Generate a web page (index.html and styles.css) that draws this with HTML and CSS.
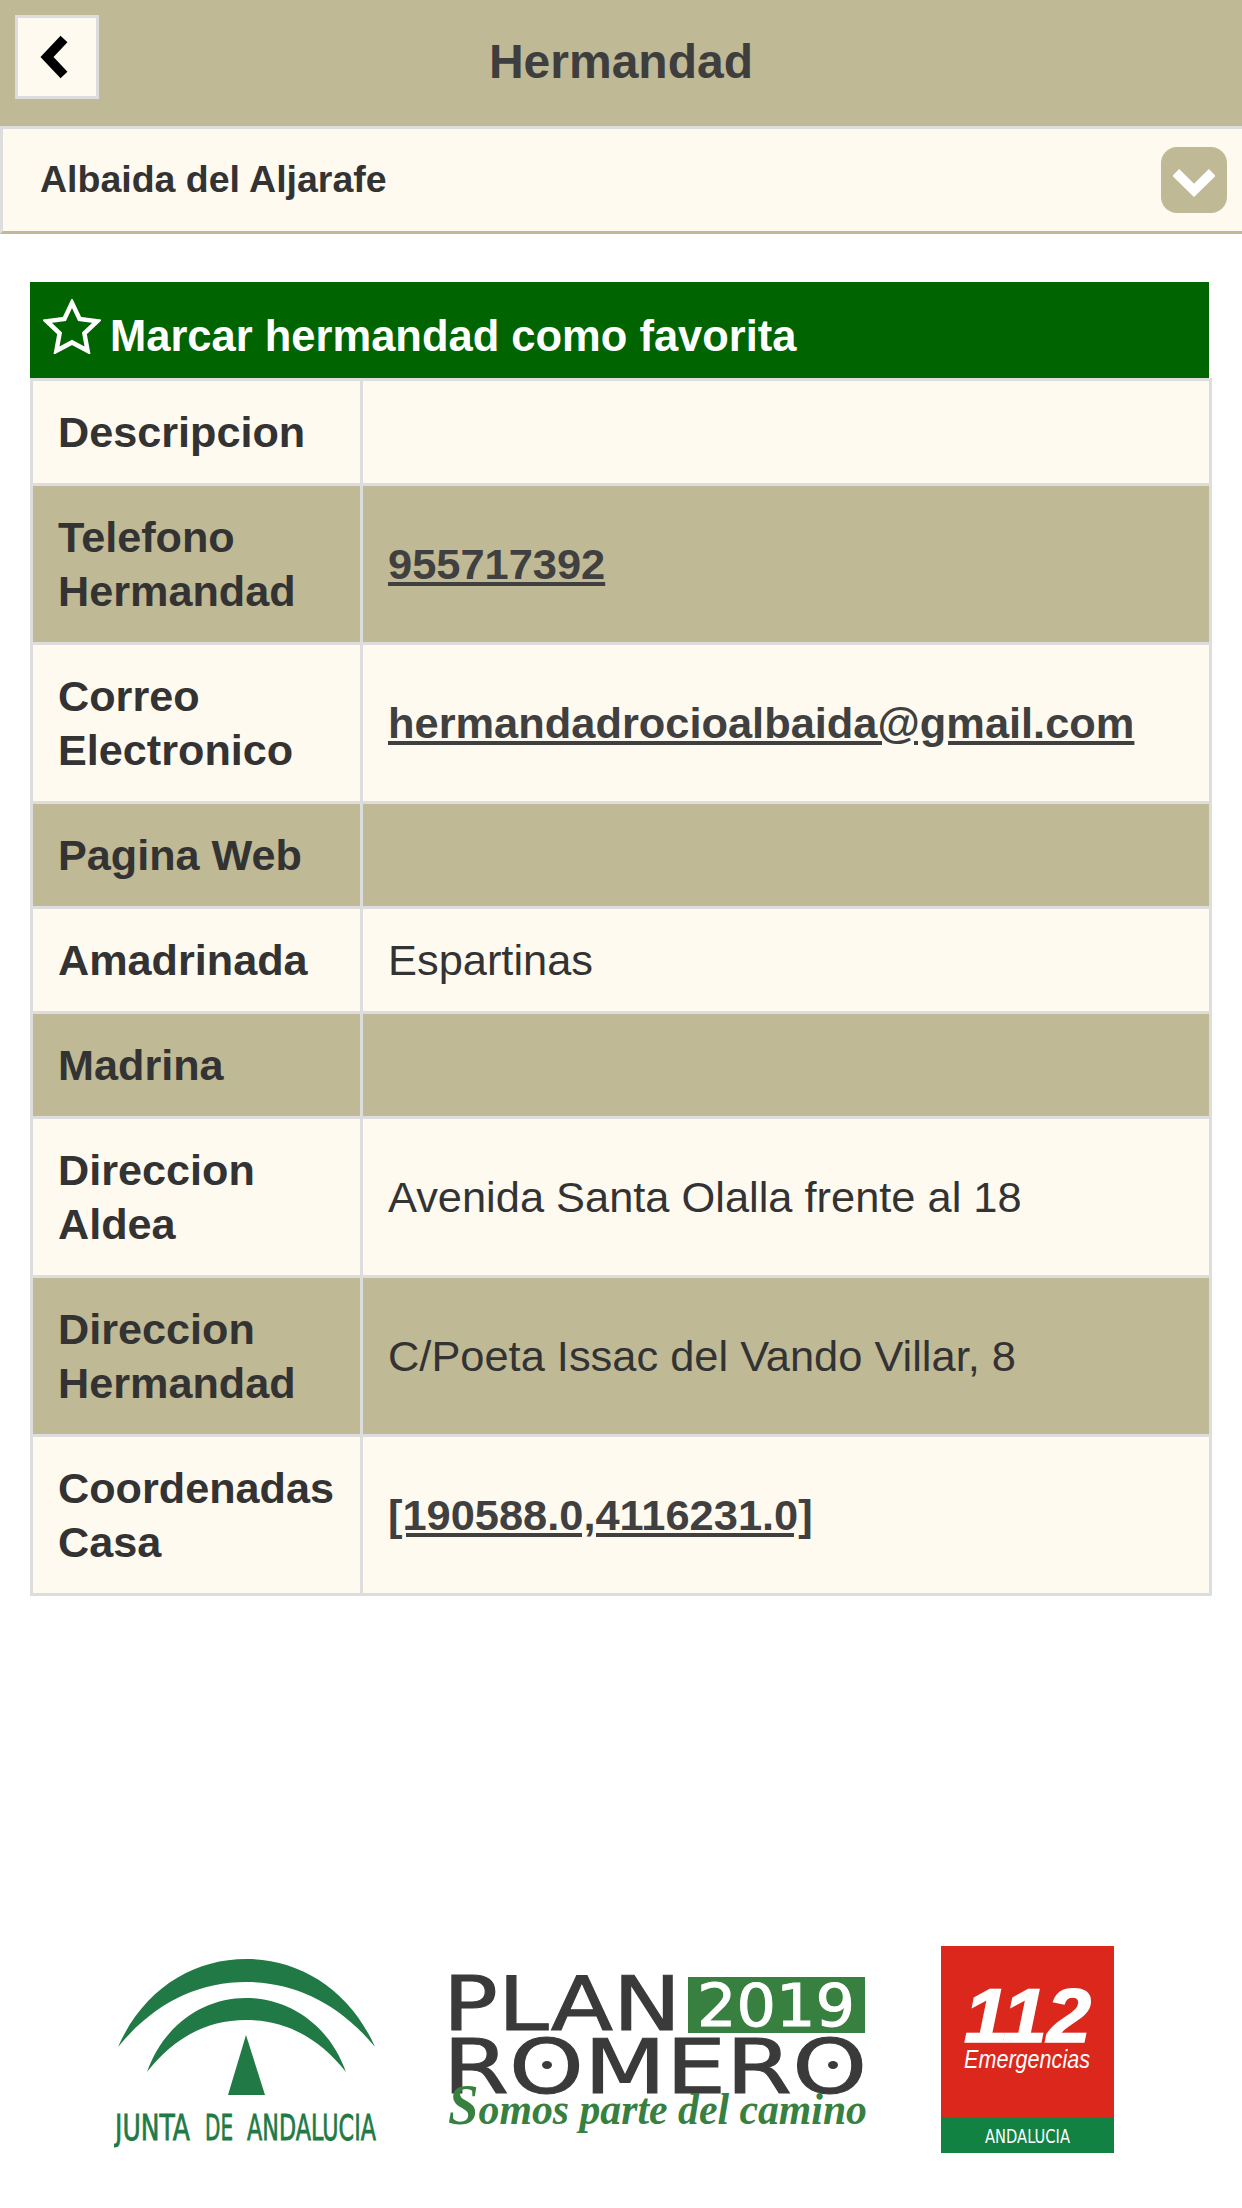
FILE: index.html
```html
<!DOCTYPE html>
<html lang="es">
<head>
<meta charset="utf-8">
<title>Hermandad</title>
<link rel="stylesheet" href="styles.css">
</head>
<body>
<header class="topbar">
  <button class="back" aria-label="Volver">
    <svg width="30" height="44" viewBox="0 0 30 44"><path d="M24 4 L7 22 L24 40" fill="none" stroke="#000" stroke-width="9.500"/></svg>
  </button>
  <h1 class="title">Hermandad</h1>
</header>
<div class="select">
  <span class="select-text">Albaida del Aljarafe</span>
  <span class="select-btn">
    <svg width="42" height="28" viewBox="0 0 42 28"><path d="M2.800 3.500 L21 21.300 L39.200 3.500" fill="none" stroke="#fff" stroke-width="9.500"/></svg>
  </span>
</div>
<main class="content">
  <div class="fav">
    <svg class="star" width="58" height="55" viewBox="0 0 58 55"><path d="M29 3.900 L36.600 19.900 L54.200 22.200 L41.400 34.400 L44.600 51.800 L29 43.400 L13.400 51.800 L16.600 34.400 L3.800 22.200 L21.400 19.900 Z" fill="none" stroke="#fff" stroke-width="4.500"/></svg>
    <span>Marcar hermandad como favorita</span>
  </div>
  <table class="info">
    <tr class="light short"><th>Descripcion</th><td></td></tr>
    <tr class="dark"><th>Telefono Hermandad</th><td><a href="#">955717392</a></td></tr>
    <tr class="light"><th>Correo Electronico</th><td><a href="#">hermandadrocioalbaida@gmail.com</a></td></tr>
    <tr class="dark short"><th>Pagina Web</th><td></td></tr>
    <tr class="light short"><th>Amadrinada</th><td>Espartinas</td></tr>
    <tr class="dark short"><th>Madrina</th><td></td></tr>
    <tr class="light"><th>Direccion Aldea</th><td>Avenida Santa Olalla frente al 18</td></tr>
    <tr class="dark"><th>Direccion Hermandad</th><td>C/Poeta Issac del Vando Villar, 8</td></tr>
    <tr class="light"><th>Coordenadas Casa</th><td><a href="#">[190588.0,4116231.0]</a></td></tr>
  </table>
</main>
<footer class="logos">
  <svg class="logo-junta" width="264" height="190" viewBox="0 0 264 190">
    <path d="M4 89 C30 30 80 1 132 1 C184 1 235 30 261 89 C225 45 180 24 132 24 C84 24 40 45 4 89 Z" fill="#217a45"/>
    <path d="M33 114 C50 66 90 40 132 40 C174 40 215 66 232 114 C205 80 172 62 132 62 C92 62 60 80 33 114 Z" fill="#217a45"/>
    <path d="M132 77 L151 137 L114 137 Z" fill="#217a45"/>
    <text x="1" y="182" class="junta-text" textLength="75" lengthAdjust="spacingAndGlyphs">JUNTA</text>
    <text x="91" y="182" class="junta-text" textLength="28" lengthAdjust="spacingAndGlyphs">DE</text>
    <text x="133" y="182" class="junta-text" textLength="129" lengthAdjust="spacingAndGlyphs">ANDALUCIA</text>
  </svg>
  <svg class="logo-plan" width="422" height="166" viewBox="0 0 422 166">
    <text x="-4" y="55" class="plan-text" textLength="238" lengthAdjust="spacingAndGlyphs">PLAN</text>
    <rect x="241" y="2" width="177" height="56" fill="#37803f"/>
    <text x="329" y="51" class="year-text" text-anchor="middle" textLength="158" lengthAdjust="spacingAndGlyphs">2019</text>
    <text x="-4" y="118" class="plan-text" textLength="424" lengthAdjust="spacingAndGlyphs">ROMERO</text>
    <ellipse cx="100" cy="90" rx="5" ry="4" fill="#3a3a3a"/>
    <ellipse cx="386" cy="90" rx="5" ry="4" fill="#3a3a3a"/>
    <text x="1" y="149" class="somos-text" textLength="419" lengthAdjust="spacingAndGlyphs"><tspan class="somos-cap">S</tspan>omos parte del camino</text>
  </svg>
  <svg class="logo-112" width="173" height="207" viewBox="0 0 173 207">
    <rect width="173" height="171" fill="#db271c"/>
    <rect y="171" width="173" height="36" fill="#128243"/>
    <text x="23" y="96" class="num-text" textLength="127" lengthAdjust="spacingAndGlyphs">112</text>
    <text x="23" y="122" class="emer-text" textLength="126" lengthAdjust="spacingAndGlyphs">Emergencias</text>
    <text x="44" y="197" class="anda-text" textLength="85" lengthAdjust="spacingAndGlyphs">ANDALUCIA</text>
  </svg>
</footer>
</body>
</html>
```
FILE: styles.css
```css
* { box-sizing: border-box; }
html, body { margin: 0; padding: 0; }
body {
  width: 1242px;
  height: 2208px;
  background: #fff;
  font-family: "Liberation Sans", Arial, sans-serif;
  color: #333;
  overflow: hidden;
  display: flex;
  flex-direction: column;
}
.topbar {
  height: 126px;
  background: #bfb995;
  display: grid;
  grid-template-columns: 1fr auto 1fr;
  align-items: center;
}
.back {
  justify-self: start;
  align-self: start;
  margin: 15px 0 0 15px;
  width: 84px;
  height: 84px;
  padding: 0 4px 0 0;
  background: #fffaf0;
  border: 3px solid #ddd;
  display: flex;
  align-items: center;
  justify-content: center;
}
.title {
  margin: 0 0 3px;
  font-size: 48px;
  font-weight: 700;
  color: #3e3e3e;
}
.select {
  height: 108px;
  background: #fffaf0;
  border: 3px solid #ddd;
  border-bottom-color: #bfb995;
  border-right: 0;
  display: flex;
  align-items: center;
  justify-content: space-between;
  padding: 0 15px 0 37px;
}
.select-text { font-size: 37.5px; font-weight: 700; margin-bottom: 2px; }
.select-btn {
  width: 66px;
  height: 66px;
  border-radius: 16px;
  background: #bfb995;
  display: flex;
  align-items: center;
  justify-content: center;
  padding-top: 6px;
}
.content { padding: 48px 30px 0 30px; }
.fav {
  width: 1179px;
  height: 96px;
  background: #006400;
  color: #fff;
  font-size: 43.5px;
  font-weight: 700;
  display: flex;
  align-items: flex-end;
  padding: 0 0 18px 13px;
  gap: 9px;
  line-height: 48px;
}
.star { margin-bottom: 6px; }
.info {
  border-collapse: collapse;
  width: 1182px;
  table-layout: fixed;
  font-size: 43.4px;
}
.info th, .info td {
  border: 3px solid #ddd;
  padding: 0 24px;
  vertical-align: middle;
  line-height: 54px;
}
.info th {
  width: 330px;
  font-size: 43.2px;
  padding-left: 25px;
  padding-right: 0;
  text-align: left;
  font-weight: 700;
}
.info td { padding-left: 25px; }
.info tr { height: 159px; }
.info tr.short { height: 105px; }
.light { background: #fffaf0; }
.dark { background: #bfb995; }
.info a { color: #404040; font-weight: 700; text-decoration: underline; }
.logos {
  margin-top: auto;
  padding: 0 0 55px 114px;
  display: flex;
  align-items: flex-start;
}
.logo-junta { margin-top: 12px; flex: none; }
.logo-plan { margin: 29px 0 0 69px; flex: none; overflow: visible; }
.logo-112 { margin-left: 72px; flex: none; }
.junta-text { font-family: "DejaVu Sans", sans-serif; font-size: 36px; fill: #217a45; stroke: #217a45; stroke-width: 0.8px; }
.plan-text { font-family: "DejaVu Sans", sans-serif; font-size: 74px; fill: #3a3a3a; stroke: #3a3a3a; stroke-width: 1px; }
.year-text { font-family: "DejaVu Sans", sans-serif; font-size: 59px; fill: #fff; stroke: #fff; stroke-width: 1px; }
.somos-text { font-family: "Liberation Serif", serif; font-style: italic; font-weight: 700; font-size: 44px; fill: #37803f; }
.somos-cap { font-size: 58px; }
.num-text { font-family: "Liberation Sans", sans-serif; font-style: italic; font-weight: 700; font-size: 76px; fill: #fff; stroke: #fff; stroke-width: 1.5px; }
.emer-text { font-family: "Liberation Sans", sans-serif; font-style: italic; font-size: 25px; fill: #fff; }
.anda-text { font-family: "DejaVu Sans", sans-serif; font-size: 20px; fill: #fff; }
```
